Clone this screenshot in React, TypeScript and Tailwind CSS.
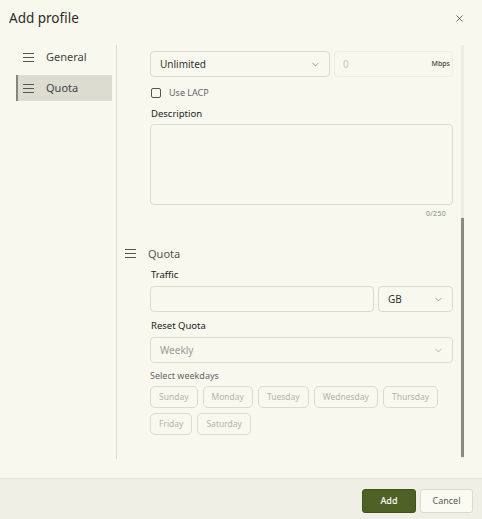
import { ChevronDown, X } from 'lucide-react';

function MenuIcon({ className = '' }: { className?: string }) {
  return (
    <svg width="11" height="9" viewBox="0 0 11 9" className={className} fill="none" stroke="currentColor" strokeWidth="1">
      <line x1="0" y1="0.5" x2="11" y2="0.5" />
      <line x1="0" y1="4.5" x2="11" y2="4.5" />
      <line x1="0" y1="8.5" x2="11" y2="8.5" />
    </svg>
  );
}

const days = ['Sunday', 'Monday', 'Tuesday', 'Wednesday', 'Thursday', 'Friday', 'Saturday'];

export default function App() {
  return (
    <div
      className="w-[482px] h-[519px] flex flex-col bg-[#f9f8ee] text-[#333] overflow-hidden"
      style={{ fontFamily: '"Noto Sans", "Open Sans", sans-serif' }}
    >
      {/* Header */}
      <div className="h-[37px] flex items-center justify-between pl-[9px] pr-[17px]">
        <span className="text-[13.5px] text-[#2b2b2b]">Add profile</span>
        <X size={11} strokeWidth={1.6} className="text-[#333]" />
      </div>

      {/* Body */}
      <div className="flex-1 flex pt-[8px] pb-[19px] min-h-0">
        {/* Sidebar */}
        <div className="w-[116px] pl-[16px] pr-[4px] flex flex-col gap-[5px]">
          <div className="h-[25px] flex items-center pl-[5px] border-l-2 border-transparent text-[#555]">
            <MenuIcon />
            <span className="ml-[12px] text-[11px] text-[#444]">General</span>
          </div>
          <div className="h-[26px] flex items-center pl-[5px] border-l-2 border-[#85857b] bg-[#dcdcd1] text-[#555]">
            <MenuIcon />
            <span className="ml-[12px] text-[11px] text-[#444]">Quota</span>
          </div>
        </div>

        {/* Content */}
        <div className="flex-1 flex border-l border-[#dddcd2]">
          <div className="flex-1 pt-[6px] pr-[8px]">
            <div className="pl-[33px]">
              <div className="flex gap-[4px]">
                <div className="w-[180px] h-[26px] border border-[#dcdbd0] rounded-[4px] flex items-center justify-between pl-[9px] pr-[8px]">
                  <span className="text-[10px] text-[#333]">Unlimited</span>
                  <ChevronDown size={11} strokeWidth={1.5} className="text-[#777]" />
                </div>
                <div className="flex-1 h-[26px] border border-[#efeee4] rounded-[4px] flex items-center justify-between pl-[8px] pr-[2px]">
                  <span className="text-[10px] text-[#c4c4bc]">0</span>
                  <span className="text-[7px] font-medium text-[#444]">Mbps</span>
                </div>
              </div>

              <div className="mt-[9px] flex items-center">
                <div className="w-[10px] h-[10px] ml-[1px] border border-[#555] rounded-[2px]" />
                <span className="ml-[8px] text-[9px] text-[#666]">Use LACP</span>
              </div>

              <div className="mt-[7px] ml-[1px] text-[9.5px] text-[#222] leading-[14px]">Description</div>
              <div className="mt-[3px] h-[81px] border border-[#dcdbd0] rounded-[4px]" />
              <div className="mt-[4px] pr-[7px] text-right text-[7px] tracking-[0.3px] text-[#888] leading-[10px]">0/250</div>
            </div>

            {/* Quota section */}
            <div className="mt-[27px] flex items-center pl-[8px] text-[#555]">
              <MenuIcon />
              <span className="ml-[12px] text-[11px] text-[#555]">Quota</span>
            </div>

            <div className="pl-[33px]">
              <div className="mt-[6px] ml-[1px] text-[9.5px] text-[#222] leading-[14px]">Traffic</div>
              <div className="mt-[4px] flex gap-[4px]">
                <div className="flex-1 h-[26px] border border-[#dcdbd0] rounded-[4px]" />
                <div className="w-[75px] h-[26px] border border-[#dcdbd0] rounded-[4px] flex items-center justify-between pl-[9px] pr-[8px]">
                  <span className="text-[10px] text-[#333]">GB</span>
                  <ChevronDown size={11} strokeWidth={1.5} className="text-[#777]" />
                </div>
              </div>

              <div className="mt-[7px] ml-[1px] text-[9.5px] text-[#222] leading-[14px]">Reset Quota</div>
              <div className="mt-[4px] h-[26px] border border-[#dcdbd0] rounded-[4px] flex items-center justify-between pl-[9px] pr-[8px]">
                <span className="text-[10px] text-[#999]">Weekly</span>
                <ChevronDown size={11} strokeWidth={1.5} className="text-[#999]" />
              </div>

              <div className="mt-[6px] text-[9px] text-[#666] leading-[14px]">Select weekdays</div>
              <div className="mt-[3px] flex flex-wrap gap-x-[5px] gap-y-[5px] w-[300px]">
                {days.map((d) => (
                  <div
                    key={d}
                    className="h-[22px] px-[8px] border border-[#dcdbd0] rounded-[5px] flex items-center text-[8.5px] text-[#b4b4ac]"
                  >
                    {d}
                  </div>
                ))}
              </div>
            </div>
          </div>

          {/* Scrollbar */}
          <div className="w-[3px] mr-[18px] bg-[#eeede3] flex flex-col">
            <div className="h-[173px]" />
            <div className="flex-1 bg-[#8a8a86] mb-[2px]" />
          </div>
        </div>
      </div>

      {/* Footer */}
      <div className="h-[41px] border-t border-[#e6e5db] bg-[#f0efe6] flex items-center justify-end gap-[4px] pr-[9px] pt-[4px]">
        <button className="w-[54px] h-[24px] rounded-[3px] bg-[#4f6226] border border-[#42531f] text-white text-[9px] font-medium">
          Add
        </button>
        <button className="w-[53px] h-[24px] rounded-[3px] bg-[#fbfbf4] border border-[#dcdbd0] text-[#555] text-[9px]">
          Cancel
        </button>
      </div>
    </div>
  );
}
